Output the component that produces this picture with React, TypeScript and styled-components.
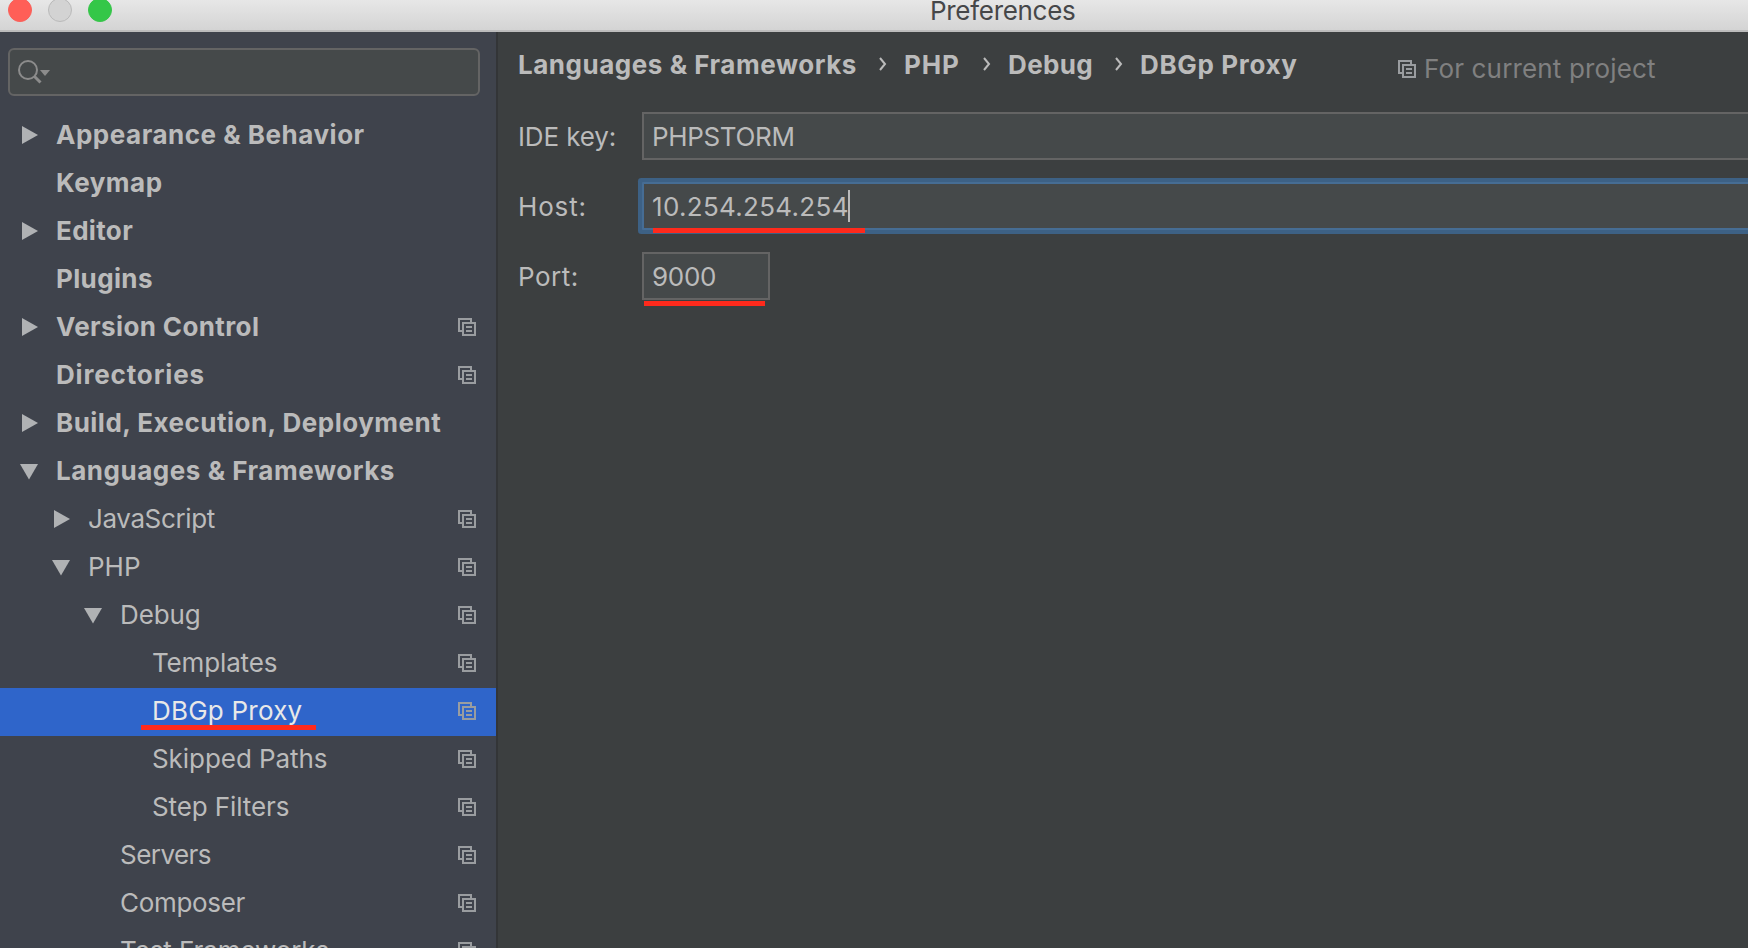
import React from "react";
import styled, { createGlobalStyle } from "styled-components";

const Global = createGlobalStyle`
  * { box-sizing: border-box; }
  body { margin: 0; overflow: hidden; }
`;

const Window = styled.div`
  width: 1748px;
  height: 948px;
  display: flex;
  flex-direction: column;
  overflow: hidden;
  background: #3c3f40;
  color: #bbbbbb;
  font: 400 26px/48px Inter, "Liberation Sans", sans-serif;
  white-space: nowrap;
`;

const TitleBar = styled.header`
  display: flex;
  flex: none;
  height: 32px;
  padding-left: 8px;
  border-bottom: 2px solid #bcbcbc;
  background: linear-gradient(#e7e7e7, #d4d4d4);
`;

const Lights = styled.div`
  display: flex;
  gap: 16px;
  width: 922px;
  margin-top: -2px;
`;

const Light = styled.span<{ $fill: string; $ring: string }>`
  width: 24px;
  height: 24px;
  border: 1px solid ${(p) => p.$ring};
  border-radius: 50%;
  background: ${(p) => p.$fill};
`;

const Title = styled.span<{ $track: number }>`
  height: 20px;
  margin-top: -13px;
  color: #464749;
  letter-spacing: ${(p) => p.$track}px;
`;

const Body = styled.div`
  display: flex;
  flex: 1;
  min-height: 0;
`;

const Sidebar = styled.aside`
  display: flex;
  flex: none;
  flex-direction: column;
  width: 498px;
  padding-top: 16px;
  border-right: 2px solid #333537;
  background: #3f434c;
  overflow: hidden;
`;

const Search = styled.div`
  display: flex;
  flex: none;
  width: 472px;
  height: 48px;
  margin: 0 0 16px 8px;
  border: 2px solid #646464;
  border-radius: 6px;
  background: #45494a;
`;

const Row = styled.div<{ $depth: number; $bold?: boolean; $selected?: boolean }>`
  display: flex;
  flex: none;
  align-items: center;
  height: 48px;
  padding: 0 20px 2px ${(p) => 20 + p.$depth * 32}px;
  background: ${(p) => (p.$selected ? "#2f65ca" : "transparent")};
  color: ${(p) => (p.$selected ? "#e8e8e8" : "#bbbbbb")};
  font-weight: ${(p) => (p.$bold ? 700 : 400)};
`;

const ArrowSlot = styled.span`
  display: flex;
  width: 36px;
`;

const Label = styled.span<{ $track: number }>`
  position: relative;
  flex: 1;
  letter-spacing: ${(p) => p.$track}px;
`;

const Mark = styled.i<{ $left: number; $top: number; $width: number }>`
  position: absolute;
  left: ${(p) => p.$left}px;
  top: ${(p) => p.$top}px;
  width: ${(p) => p.$width}px;
  height: 5px;
  background: #ff2a1c;
`;

const Main = styled.main`
  flex: 1;
  min-width: 0;
  padding-left: 20px;
`;

const Crumbs = styled.div`
  display: flex;
  height: 80px;
  padding-top: 9px;
  font-weight: 700;
`;

const Crumb = styled.span<{ $width: number; $track: number }>`
  width: ${(p) => p.$width}px;
  letter-spacing: ${(p) => p.$track}px;
`;

const Chevron = styled.svg`
  flex: none;
  width: 8px;
  height: 14px;
  margin: 16px 17px 0 0;
`;

const Scope = styled.span`
  display: flex;
  align-items: center;
  height: 48px;
  margin-top: 4px;
  color: #808080;
  font-weight: 400;
`;

const ScopeText = styled.span<{ $track: number }>`
  margin-left: 8px;
  letter-spacing: ${(p) => p.$track}px;
`;

const Field = styled.label`
  display: flex;
  height: 48px;
  margin-bottom: 22px;
`;

const FieldName = styled.span<{ $track: number }>`
  flex: none;
  width: 124px;
  padding-top: 1px;
  letter-spacing: ${(p) => p.$track}px;
`;

const Input = styled.span<{ $focused?: boolean; $width?: number; $track: number }>`
  position: relative;
  display: flex;
  flex: ${(p) => (p.$width ? "none" : "1")};
  width: ${(p) => (p.$width ? `${p.$width}px` : "auto")};
  margin-right: ${(p) => (p.$width ? 0 : -20)}px;
  padding: 1px 0 0 8px;
  border: 2px solid ${(p) => (p.$focused ? "#466d94" : "#646464")};
  background: #45494a;
  box-shadow: ${(p) => (p.$focused ? "0 0 0 4px #3d6185" : "none")};
  border-radius: ${(p) => (p.$focused ? 1 : 0)}px;
  line-height: 44px;
  letter-spacing: ${(p) => p.$track}px;
`;

const Caret = styled.i`
  position: absolute;
  left: 204px;
  top: 6px;
  width: 2px;
  height: 32px;
  background: #bbbbbb;
`;

const CopyIcon = () => (
  <svg width="18" height="18" viewBox="0 0 18 18" fill="#9a9da0" shapeRendering="crispEdges">
    <path d="M0 0h14v2H0zM0 2h2v12H0zM12 2h2v2h-2zM2 12h2v2H2z" />
    <path fillRule="evenodd" d="M4 4h14v14H4zM6 6v10h10V6z" />
    <path d="M8 8h6v2H8zM8 12h6v2H8z" />
  </svg>
);

const Arrow = ({ open }: { open: boolean }) => (
  <svg width="20" height="20" viewBox="0 0 20 20" fill="#b0b2b4">
    <path d={open ? "M0 3h18L9 18.5z" : "M2 1v18l16-9z"} />
  </svg>
);

type Item = {
  text: string;
  track: number;
  depth?: number;
  arrow?: "open" | "closed";
  bold?: boolean;
  copy?: boolean;
  selected?: boolean;
};

const items: Item[] = [
  { text: "Appearance & Behavior", track: 0.52, arrow: "closed", bold: true },
  { text: "Keymap", track: 0.5, bold: true },
  { text: "Editor", track: 0.34, arrow: "closed", bold: true },
  { text: "Plugins", track: 0.36, bold: true },
  { text: "Version Control", track: 0.38, arrow: "closed", bold: true, copy: true },
  { text: "Directories", track: 0.84, bold: true, copy: true },
  { text: "Build, Execution, Deployment", track: 0.48, arrow: "closed", bold: true },
  { text: "Languages & Frameworks", track: 0.53, arrow: "open", bold: true },
  { text: "JavaScript", track: -0.38, depth: 1, arrow: "closed", copy: true },
  { text: "PHP", track: 0, depth: 1, arrow: "open", copy: true },
  { text: "Debug", track: -0.1, depth: 2, arrow: "open", copy: true },
  { text: "Templates", track: -0.15, depth: 3, copy: true },
  { text: "DBGp Proxy", track: 0.22, depth: 3, copy: true, selected: true },
  { text: "Skipped Paths", track: -0.06, depth: 3, copy: true },
  { text: "Step Filters", track: -0.1, depth: 3, copy: true },
  { text: "Servers", track: -0.54, depth: 2, copy: true },
  { text: "Composer", track: -0.32, depth: 2, copy: true },
  { text: "Test Frameworks", track: -0.09, depth: 2, copy: true },
];

const Separator = () => (
  <Chevron viewBox="0 0 8 14" fill="none" stroke="#bbbbbb" strokeWidth="2">
    <path d="M1 1l5 6-5 6" />
  </Chevron>
);

export default function App() {
  return (
    <Window>
      <Global />
      <TitleBar>
        <Lights>
          <Light $fill="#ff5f57" $ring="#f9605a" />
          <Light $fill="#d3d3d3" $ring="#bababa" />
          <Light $fill="#34c748" $ring="#38c54b" />
        </Lights>
        <Title $track={-0.3}>Preferences</Title>
      </TitleBar>
      <Body>
        <Sidebar>
          <Search>
            <svg width="40" height="44" viewBox="0 0 40 44" fill="none">
              <circle cx="18" cy="20" r="9" stroke="#8c8c8c" strokeWidth="2" />
              <path d="M24.5 26.5l6 6" stroke="#8c8c8c" strokeWidth="3" />
              <path d="M30 20h10l-5 6z" fill="#8c8c8c" />
            </svg>
          </Search>
          {items.map((it) => (
            <Row key={it.text} $depth={it.depth ?? 0} $bold={it.bold} $selected={it.selected}>
              <ArrowSlot>{it.arrow && <Arrow open={it.arrow === "open"} />}</ArrowSlot>
              <Label $track={it.track}>
                {it.text}
                {it.selected && <Mark $left={-11} $top={38} $width={175} />}
              </Label>
              {it.copy && <CopyIcon />}
            </Row>
          ))}
        </Sidebar>
        <Main>
          <Crumbs>
            <Crumb $width={361} $track={0.53}>Languages &amp; Frameworks</Crumb>
            <Separator />
            <Crumb $width={79} $track={0.9}>PHP</Crumb>
            <Separator />
            <Crumb $width={107} $track={0.38}>Debug</Crumb>
            <Separator />
            <Crumb $width={258} $track={0.65}>DBGp Proxy</Crumb>
            <Scope>
              <CopyIcon />
              <ScopeText $track={0.15}>For current project</ScopeText>
            </Scope>
          </Crumbs>
          <Field>
            <FieldName $track={-0.13}>IDE key:</FieldName>
            <Input $track={-0.34}>PHPSTORM</Input>
          </Field>
          <Field>
            <FieldName $track={0.85}>Host:</FieldName>
            <Input $track={0.31} $focused>
              10.254.254.254
              <Caret />
              <Mark $left={9} $top={44} $width={212} />
            </Input>
          </Field>
          <Field>
            <FieldName $track={0.5}>Port:</FieldName>
            <Input $track={-0.31} $width={128}>
              9000
              <Mark $left={0} $top={47} $width={121} />
            </Input>
          </Field>
        </Main>
      </Body>
    </Window>
  );
}
